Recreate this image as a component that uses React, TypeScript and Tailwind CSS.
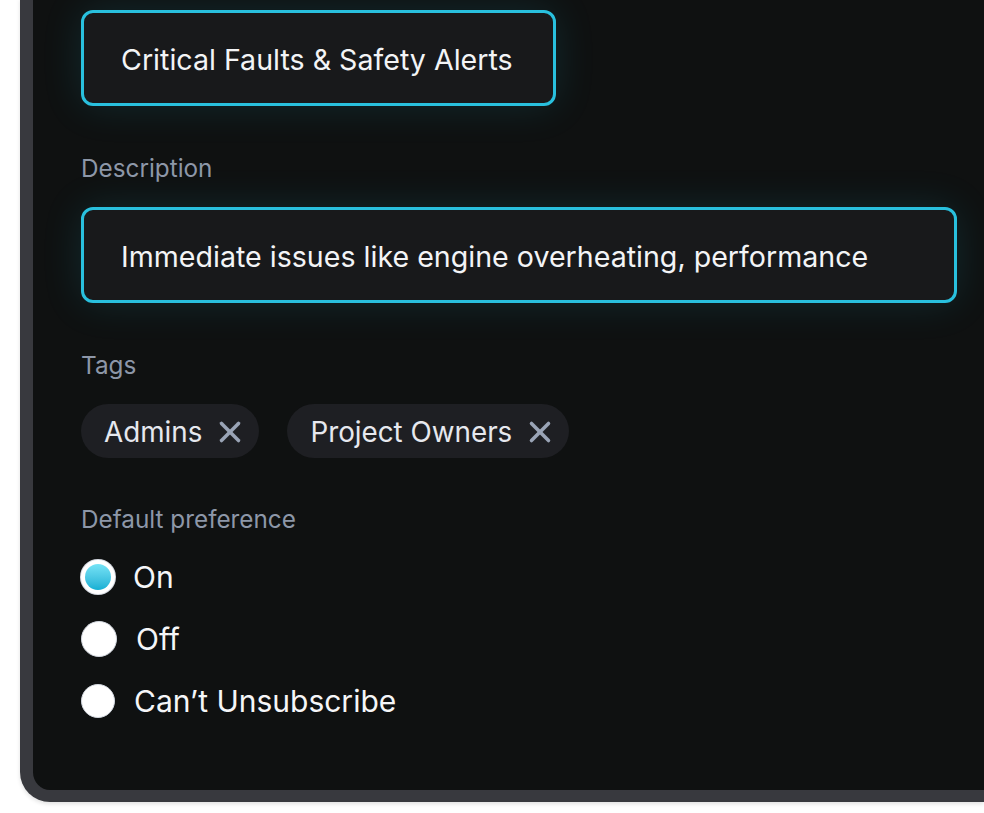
import { X } from 'lucide-react'

const font = { fontFamily: 'Inter, "Noto Sans", sans-serif' }

function FieldLabel({ children }: { children: React.ReactNode }) {
  return <p className="text-[24.3px] leading-[28px] text-[#8d97a8]">{children}</p>
}

function TextBox({ value, wide }: { value: string; wide?: boolean }) {
  return (
    <div
      className={`flex h-[96px] items-center rounded-[12px] border-[3px] border-[#29c0de] bg-[#18191b] pl-[37px] shadow-[0_0_40px_rgba(34,200,230,0.13)] ${
        wide ? 'w-[876px]' : 'w-[475px]'
      }`}
    >
      <span className="pt-[4px] text-[28.6px] leading-none text-[#f3f4f6]">{value}</span>
    </div>
  )
}

function Chip({ label }: { label: string }) {
  return (
    <div className="flex h-[54px] items-center gap-[11px] rounded-full bg-[#1e1f23] pl-[23px] pr-[12px]">
      <span className="pt-[3px] text-[27.8px] leading-none text-[#e6e8ee]">{label}</span>
      <X size={34} strokeWidth={2.5} className="mt-[2px] text-[#9aa4b6]" />
    </div>
  )
}

function Radio({ label, checked, big }: { label: string; checked?: boolean; big?: boolean }) {
  return (
    <label className="flex h-[40px] items-center">
      {checked ? (
        <span className="mr-[18px] flex h-[34px] w-[34px] items-center justify-center rounded-full bg-white shadow-[0_0_0_1px_#d6dbe3]">
          <span className="h-[26px] w-[26px] rounded-full bg-gradient-to-b from-[#74e3f6] to-[#0fb0d4]" />
        </span>
      ) : (
        <span
          className={`mr-[19px] rounded-full border-[1.5px] border-[#d3d8e0] bg-white ${
            big ? 'h-[36px] w-[36px]' : 'h-[34px] w-[34px]'
          }`}
        />
      )}
      <span className="text-[30px] leading-none text-[#f5f6f8]">{label}</span>
    </label>
  )
}

export default function App() {
  return (
    <div style={font} className="flex h-[813px] flex-col justify-end overflow-hidden bg-white pb-[11px] pl-[20px]">
      <div className="rounded-bl-[30px] border-b-[12px] border-l-[13px] border-[#38393e] bg-[#0f1111] pb-[69px] pl-[48px] pt-[12px] shadow-[0_2px_4px_rgba(0,0,0,0.12)]">
        <TextBox value="Critical Faults & Safety Alerts" />

        <div className="mt-[48px]">
          <FieldLabel>Description</FieldLabel>
        </div>
        <div className="mt-[25px]">
          <TextBox wide value="Immediate issues like engine overheating, performance" />
        </div>

        <div className="mt-[48px]">
          <FieldLabel>Tags</FieldLabel>
        </div>
        <div className="mt-[25px] flex gap-[28px]">
          <Chip label="Admins" />
          <Chip label="Project Owners" />
        </div>

        <div className="mt-[47px]">
          <FieldLabel>Default preference</FieldLabel>
        </div>
        <div className="mt-[24px] flex flex-col gap-[22px]">
          <Radio label="On" checked />
          <Radio label="Off" big />
          <Radio label="Can’t Unsubscribe" />
        </div>
      </div>
    </div>
  )
}
